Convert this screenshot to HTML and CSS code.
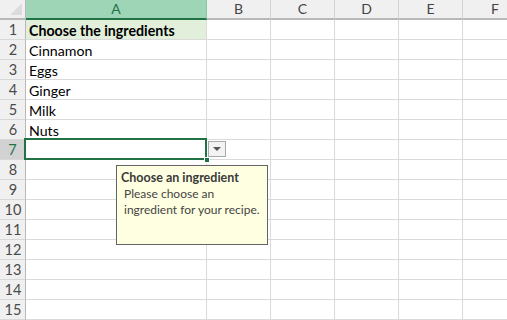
FILE: index.html
```html
<!DOCTYPE html>
<html>
<head>
<meta charset="utf-8">
<link rel="stylesheet" href="styles.css">
</head>
<body>
<div class="sheet">
  <div class="row head">
    <div class="rh corner"><span class="tri"></span></div>
    <div class="c a ch sel">A</div>
    <div class="c ch">B</div>
    <div class="c ch">C</div>
    <div class="c ch">D</div>
    <div class="c ch">E</div>
    <div class="c ch last">F</div>
  </div>
  <div class="row"><div class="rh">1</div><div class="c a title">Choose the ingredients</div><div class="c"></div><div class="c"></div><div class="c"></div><div class="c"></div><div class="c last"></div></div>
  <div class="row"><div class="rh">2</div><div class="c a">Cinnamon</div><div class="c"></div><div class="c"></div><div class="c"></div><div class="c"></div><div class="c last"></div></div>
  <div class="row"><div class="rh">3</div><div class="c a">Eggs</div><div class="c"></div><div class="c"></div><div class="c"></div><div class="c"></div><div class="c last"></div></div>
  <div class="row"><div class="rh">4</div><div class="c a">Ginger</div><div class="c"></div><div class="c"></div><div class="c"></div><div class="c"></div><div class="c last"></div></div>
  <div class="row"><div class="rh">5</div><div class="c a">Milk</div><div class="c"></div><div class="c"></div><div class="c"></div><div class="c"></div><div class="c last"></div></div>
  <div class="row"><div class="rh">6</div><div class="c a">Nuts</div><div class="c"></div><div class="c"></div><div class="c"></div><div class="c"></div><div class="c last"></div></div>
  <div class="row"><div class="rh rsel">7</div><div class="c a"></div><div class="c"></div><div class="c"></div><div class="c"></div><div class="c"></div><div class="c last"></div></div>
  <div class="row"><div class="rh">8</div><div class="c a"></div><div class="c"></div><div class="c"></div><div class="c"></div><div class="c"></div><div class="c last"></div></div>
  <div class="row"><div class="rh">9</div><div class="c a"></div><div class="c"></div><div class="c"></div><div class="c"></div><div class="c"></div><div class="c last"></div></div>
  <div class="row"><div class="rh">10</div><div class="c a"></div><div class="c"></div><div class="c"></div><div class="c"></div><div class="c"></div><div class="c last"></div></div>
  <div class="row"><div class="rh">11</div><div class="c a"></div><div class="c"></div><div class="c"></div><div class="c"></div><div class="c"></div><div class="c last"></div></div>
  <div class="row"><div class="rh">12</div><div class="c a"></div><div class="c"></div><div class="c"></div><div class="c"></div><div class="c"></div><div class="c last"></div></div>
  <div class="row"><div class="rh">13</div><div class="c a"></div><div class="c"></div><div class="c"></div><div class="c"></div><div class="c"></div><div class="c last"></div></div>
  <div class="row"><div class="rh">14</div><div class="c a"></div><div class="c"></div><div class="c"></div><div class="c"></div><div class="c"></div><div class="c last"></div></div>
  <div class="row"><div class="rh">15</div><div class="c a"></div><div class="c"></div><div class="c"></div><div class="c"></div><div class="c"></div><div class="c last"></div></div>

  <div class="selection"><span class="handle"></span></div>
  <div class="dropbtn"><span class="arrow"></span></div>
  <div class="tip">
    <div class="tip-title">Choose an ingredient</div>
    <div class="tip-body">Please choose an<br>ingredient for your recipe.</div>
  </div>
</div>
</body>
</html>
```
FILE: styles.css
```css
* { box-sizing: border-box; }
html, body { margin: 0; padding: 0; background: #fff; }
body { width: 507px; height: 320px; overflow: hidden; }
.sheet {
  position: relative;
  width: 507px;
  font-family: "Lato", "Open Sans", sans-serif;
}
.row { display: flex; height: 20px; }
.rh {
  width: 26px; flex: none;
  background: #f0f0f0;
  border-right: 1px solid #b8b8b8;
  border-bottom: 1px solid #d8d8d8;
  color: #4a4a4a;
  font-family: "Lato", sans-serif;
  font-size: 14.5px;
  text-align: center;
  line-height: 20px;
  padding-left: 1px;
}
.rh.rsel { background: #d2d2d2; color: #217346; border-right: 2px solid #217346; }
.c {
  width: 64px; flex: none;
  border-right: 1px solid #dadada;
  border-bottom: 1px solid #dadada;
  font-size: 14.2px;
  color: #000;
  line-height: 21px;
  padding-left: 3px;
  white-space: nowrap;
}
.c.a { width: 181px; }
.c.last { flex: 1; border-right: none; }
.title { font-weight: 700; background: #e2efda; }
.head { height: 20px; }
.head .rh { border-bottom: 2px solid #b8b8b8; position: relative; }
.corner .tri {
  position: absolute; right: 3px; bottom: 3px;
  width: 0; height: 0;
  border-left: 12px solid transparent;
  border-bottom: 12px solid #dcdcdc;
}
.ch {
  background: #f0f0f0;
  border-right: 1px solid #d4d4d4;
  border-bottom: 2px solid #b8b8b8;
  color: #444;
  font-family: "Lato", sans-serif;
  font-size: 14px;
  text-align: center;
  line-height: 18px;
  padding-left: 0;
}
.ch.sel { background: #9fd5b7; color: #217346; border-bottom: 2px solid #217346; border-right: 1px solid #8cc4a6; }
.ch.last { text-align: left; padding-left: 28px; }

.selection {
  position: absolute;
  left: 24px; top: 138px;
  width: 183px; height: 22px;
  border: 2px solid #217346;
}
.handle {
  position: absolute; right: -5px; bottom: -5px;
  width: 6px; height: 6px;
  background: #217346;
  border: 1px solid #fff;
}
.dropbtn {
  position: absolute;
  left: 208px; top: 141px;
  width: 18px; height: 16px;
  background: #f3f3f3;
  border: 1px solid #a8a8a8;
}
.dropbtn .arrow {
  position: absolute; left: 4px; top: 5px;
  width: 0; height: 0;
  border-left: 4px solid transparent;
  border-right: 4px solid transparent;
  border-top: 4px solid #555;
}
.tip {
  position: absolute;
  left: 116px; top: 165px;
  width: 152px; height: 80px;
  background: #ffffe1;
  border: 1px solid #646464;
  font-family: "Lato", sans-serif;
  font-size: 12.5px;
  color: #333;
  padding: 4px 0 0 4px;
  white-space: nowrap;
}
.tip-title { font-weight: 700; line-height: 16px; color: #3a3a3a; }
.tip-body { padding-left: 3px; line-height: 15.5px; color: #444; font-size: 12px; }
```
